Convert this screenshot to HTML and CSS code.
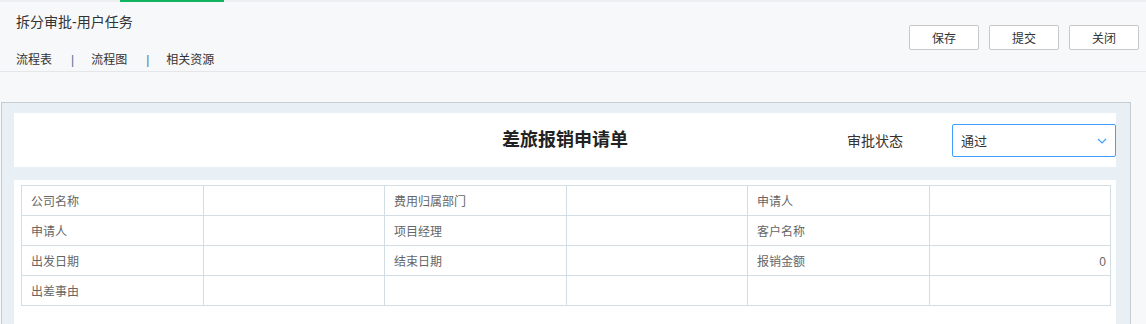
FILE: index.html
```html
<!DOCTYPE html>
<html lang="zh-CN">

<head>
    <meta charset="utf-8">
    <meta name="viewport" content="width=device-width, initial-scale=1.0">
    <title>拆分审批-用户任务</title>
    <link rel="stylesheet" href="styles.css">
</head>

<body>
    <div class="topbar"><span class="topbar-active"></span></div>

    <div class="header">
        <div class="header-left">
            <div class="page-title">拆分审批-用户任务</div>
            <div class="tabs">
                <a class="tab">流程表</a>
                <span class="tab-sep">|</span>
                <a class="tab">流程图</a>
                <span class="tab-sep">|</span>
                <a class="tab">相关资源</a>
            </div>
        </div>
        <div class="actions">
            <button class="btn">保存</button>
            <button class="btn">提交</button>
            <button class="btn">关闭</button>
        </div>
    </div>

    <div class="panel">
        <div class="card form-head">
            <div></div>
            <div class="form-title">差旅报销申请单</div>
            <div class="status">
                <span class="status-label">审批状态</span>
                <div class="select">
                    <span>通过</span>
                    <svg class="select-arrow" width="10" height="6" viewBox="0 0 10 6">
                        <polyline points="1,1 5,5 9,1" fill="none" stroke="#409eff" stroke-width="1.2" />
                    </svg>
                </div>
            </div>
        </div>

        <div class="card form-body">
            <table class="form-table">
                <tr>
                    <td>公司名称</td>
                    <td></td>
                    <td>费用归属部门</td>
                    <td></td>
                    <td>申请人</td>
                    <td></td>
                </tr>
                <tr>
                    <td>申请人</td>
                    <td></td>
                    <td>项目经理</td>
                    <td></td>
                    <td>客户名称</td>
                    <td></td>
                </tr>
                <tr>
                    <td>出发日期</td>
                    <td></td>
                    <td>结束日期</td>
                    <td></td>
                    <td>报销金额</td>
                    <td class="num">0</td>
                </tr>
                <tr>
                    <td>出差事由</td>
                    <td></td>
                    <td></td>
                    <td></td>
                    <td></td>
                    <td></td>
                </tr>
            </table>
        </div>
    </div>
</body>

</html>
```

FILE: styles.css
```css
html,
body {
    overflow: hidden;
}

body {
    margin: 0;
    background: #f7f8fa;
    font-family: "Liberation Sans", "Noto Sans CJK SC", sans-serif;
    color: #333;
}

.topbar {
    height: 2px;
    background: #eceef1;
}

.topbar-active {
    display: block;
    margin-left: 120px;
    width: 104px;
    height: 2px;
    background: #10b45f;
}

.header {
    display: flex;
    justify-content: space-between;
    height: 59px;
    padding: 10px 7px 0 16px;
    border-bottom: 1px solid #e4e6e9;
}

.page-title {
    font-size: 14px;
    line-height: 20px;
    color: #333;
}

.tabs {
    display: flex;
    margin-top: 19px;
    font-size: 12px;
    line-height: 18px;
}

.tab {
    color: #333;
    cursor: pointer;
}

.tab-sep {
    margin: 0 17px 0 19px;
    color: #56708c;
}

.actions {
    display: flex;
    gap: 10px;
    margin-top: 13px;
}

.btn {
    width: 70px;
    height: 25px;
    padding: 0;
    background: #fff;
    border: 1px solid #c9c9c9;
    border-radius: 2px;
    font-family: inherit;
    font-size: 12px;
    color: #333;
}

.panel {
    margin: 30px 15px 0 1px;
    padding: 10px 14px 0 12px;
    background: #e8eff5;
    border: 1px solid #c8ccd0;
    border-bottom: none;
}

.card {
    background: #fff;
}

.form-head {
    display: grid;
    grid-template-columns: 1fr auto 1fr;
    align-items: center;
    height: 54px;
    margin-bottom: 13px;
}

.form-title {
    font-size: 18px;
    font-weight: bold;
    color: #222;
    line-height: 24px;
}

.status {
    display: flex;
    justify-content: flex-end;
    align-items: center;
    gap: 49px;
}

.status-label {
    font-size: 14px;
    color: #333;
}

.select {
    display: flex;
    justify-content: space-between;
    align-items: center;
    box-sizing: border-box;
    width: 164px;
    height: 33px;
    margin-top: 1px;
    padding: 0 8px 0 8px;
    border: 1px solid #409eff;
    border-radius: 2px;
    font-size: 13px;
    color: #333;
}

.form-body {
    padding: 5px 5px 20px 7px;
}

.form-table {
    width: 100%;
    table-layout: fixed;
    border-collapse: collapse;
}

.form-table td {
    height: 27px;
    padding: 2px 9px 0;
    border: 1px solid #d3dde4;
    font-size: 12px;
    color: #666;
    line-height: 18px;
}

.form-table td.num {
    text-align: right;
    padding-right: 4px;
}
```
